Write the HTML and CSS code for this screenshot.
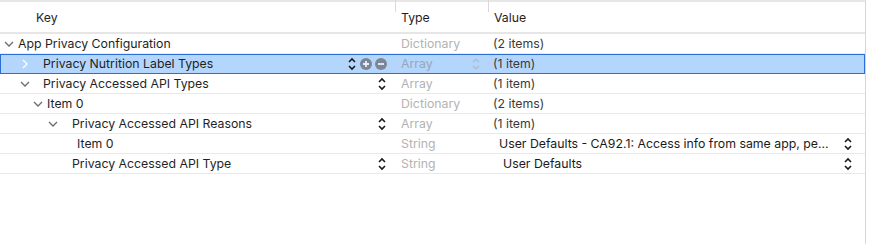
FILE: index.html
```html
<!DOCTYPE html>
<html lang="en">
  <head>
    <meta charset="utf-8"/>
    <title>Info.plist</title>
    <link rel="stylesheet" href="styles.css">
  </head>
  <body>
    <div class="plist">
      <div class="row head">
        <div class="key"><span class="label key-title">Key</span></div>
        <div class="type"><span class="sep"></span>Type</div>
        <div class="value"><span class="sep"></span>Value</div>
      </div>

      <div class="row">
        <div class="key lv0">
          <svg class="disc" viewBox="0 0 10 10"><path d="M1 3 L5 7 L9 3"/></svg>
          <span class="label">App Privacy Configuration</span>
        </div>
        <div class="type">Dictionary</div>
        <div class="value">(2 items)</div>
      </div>

      <div class="row selected">
        <div class="key lv1">
          <svg class="disc" viewBox="0 0 10 10"><path d="M3 1 L7 5 L3 9"/></svg>
          <span class="label">Privacy Nutrition Label Types</span>
          <span class="tools">
            <svg class="step" viewBox="0 0 10 14"><path d="M2 5 L5 2 L8 5 M2 9 L5 12 L8 9"/></svg>
            <svg class="btn" viewBox="0 0 12 12"><circle cx="6" cy="6" r="6"/><path d="M6 3 V9 M3 6 H9"/></svg>
            <svg class="btn" viewBox="0 0 12 12"><circle cx="6" cy="6" r="6"/><path d="M3 6 H9"/></svg>
          </span>
        </div>
        <div class="type">Array
          <svg class="step light" viewBox="0 0 10 14"><path d="M2 5 L5 2 L8 5 M2 9 L5 12 L8 9"/></svg>
        </div>
        <div class="value">(1 item)</div>
      </div>

      <div class="row">
        <div class="key lv1">
          <svg class="disc" viewBox="0 0 10 10"><path d="M1 3 L5 7 L9 3"/></svg>
          <span class="label">Privacy Accessed API Types</span>
          <span class="tools">
            <svg class="step" viewBox="0 0 10 14"><path d="M2 5 L5 2 L8 5 M2 9 L5 12 L8 9"/></svg>
          </span>
        </div>
        <div class="type">Array</div>
        <div class="value">(1 item)</div>
      </div>

      <div class="row">
        <div class="key lv2">
          <svg class="disc" viewBox="0 0 10 10"><path d="M1 3 L5 7 L9 3"/></svg>
          <span class="label">Item 0</span>
        </div>
        <div class="type">Dictionary</div>
        <div class="value">(2 items)</div>
      </div>

      <div class="row">
        <div class="key lv3">
          <svg class="disc" viewBox="0 0 10 10"><path d="M1 3 L5 7 L9 3"/></svg>
          <span class="label">Privacy Accessed API Reasons</span>
          <span class="tools">
            <svg class="step" viewBox="0 0 10 14"><path d="M2 5 L5 2 L8 5 M2 9 L5 12 L8 9"/></svg>
          </span>
        </div>
        <div class="type">Array</div>
        <div class="value">(1 item)</div>
      </div>

      <div class="row">
        <div class="key lv4">
          <span class="label">Item 0</span>
        </div>
        <div class="type">String</div>
        <div class="value popup pad1">
          <span class="text">User Defaults - CA92.1: Access info from same app, pe...</span>
          <svg class="step" viewBox="0 0 10 14"><path d="M2 5 L5 2 L8 5 M2 9 L5 12 L8 9"/></svg>
        </div>
      </div>

      <div class="row">
        <div class="key lv3b">
          <span class="label">Privacy Accessed API Type</span>
          <span class="tools">
            <svg class="step" viewBox="0 0 10 14"><path d="M2 5 L5 2 L8 5 M2 9 L5 12 L8 9"/></svg>
          </span>
        </div>
        <div class="type">String</div>
        <div class="value popup pad2">
          <span class="text">User Defaults</span>
          <svg class="step" viewBox="0 0 10 14"><path d="M2 5 L5 2 L8 5 M2 9 L5 12 L8 9"/></svg>
        </div>
      </div>
    </div>
  </body>
</html>
```

FILE: styles.css
```css
body {
  margin: 0;
  background: #ffffff;
  font-family: "Inter", "Liberation Sans", sans-serif;
  font-size: 12.3px;
  color: #1f1f1f;
}
.plist {
  width: 866px;
  height: 244px;
  border-right: solid 1px #d6d6d6;
  border-top: solid 2px #e6e6e6;
  box-sizing: border-box;
}
.row {
  display: grid;
  grid-template-columns: 395px 93px 1fr;
  height: 20px;
  border-bottom: solid 1px #e9e9e9;
  box-sizing: border-box;
  align-items: center;
}
.row.head {
  height: 32px;
  border-bottom: solid 2px #e6e6e6;
}
.row.head .type, .row.head .value {
  color: #1f1f1f;
  position: relative;
  padding-left: 6px;
}
.sep {
  position: absolute;
  left: 0;
  top: -6px;
  width: 1px;
  height: 16px;
  background: #d9d9d9;
}
.key-title {
  padding-left: 36px;
}
.key {
  display: flex;
  align-items: center;
  height: 100%;
  white-space: nowrap;
}
.lv0 { padding-left: 4px; }
.lv0 .disc { margin-right: 4px; }
.lv1 { padding-left: 20px; }
.lv1 .disc { margin-right: 13px; }
.lv2 { padding-left: 33px; }
.lv2 .disc { margin-right: 4px; }
.lv3 { padding-left: 48px; }
.lv3 .disc { margin-right: 14px; }
.lv4 { padding-left: 77px; }
.lv3b { padding-left: 72px; }
.disc {
  width: 10px;
  height: 10px;
  fill: none;
  stroke: #6b6b6b;
  stroke-width: 1.3;
}
.tools {
  margin-left: auto;
  margin-right: 8px;
  display: flex;
  align-items: center;
  gap: 3px;
}
.step {
  width: 10px;
  height: 14px;
  fill: none;
  stroke: #1a1a1a;
  stroke-width: 1.6;
}
.step.light {
  stroke: #a9b8cc;
  stroke-width: 1.1;
  margin-left: auto;
  margin-right: 7px;
}
.btn {
  width: 12px;
  height: 12px;
}
.btn circle {
  fill: #7d8694;
}
.btn path {
  stroke: #e6efff;
  stroke-width: 1.8;
}
.type {
  color: #b3b3b3;
  padding-left: 6px;
  display: flex;
  align-items: center;
  height: 100%;
}
.value {
  color: #3a3a3a;
  padding-left: 5px;
  display: flex;
  align-items: center;
  height: 100%;
}
.popup {
  color: #1a1a1a;
  padding-right: 12px;
}
.popup .step {
  margin-left: auto;
}
.pad1 { padding-left: 11px; }
.pad2 { padding-left: 15px; }
.selected {
  background: #b4d6fd;
  outline: solid 1px #2a6fd3;
  outline-offset: -1px;
  border-bottom-color: #2a6fd3;
}
.selected .disc {
  stroke: #ffffff;
}
.selected .type {
  color: #97a6b9;
}
```
